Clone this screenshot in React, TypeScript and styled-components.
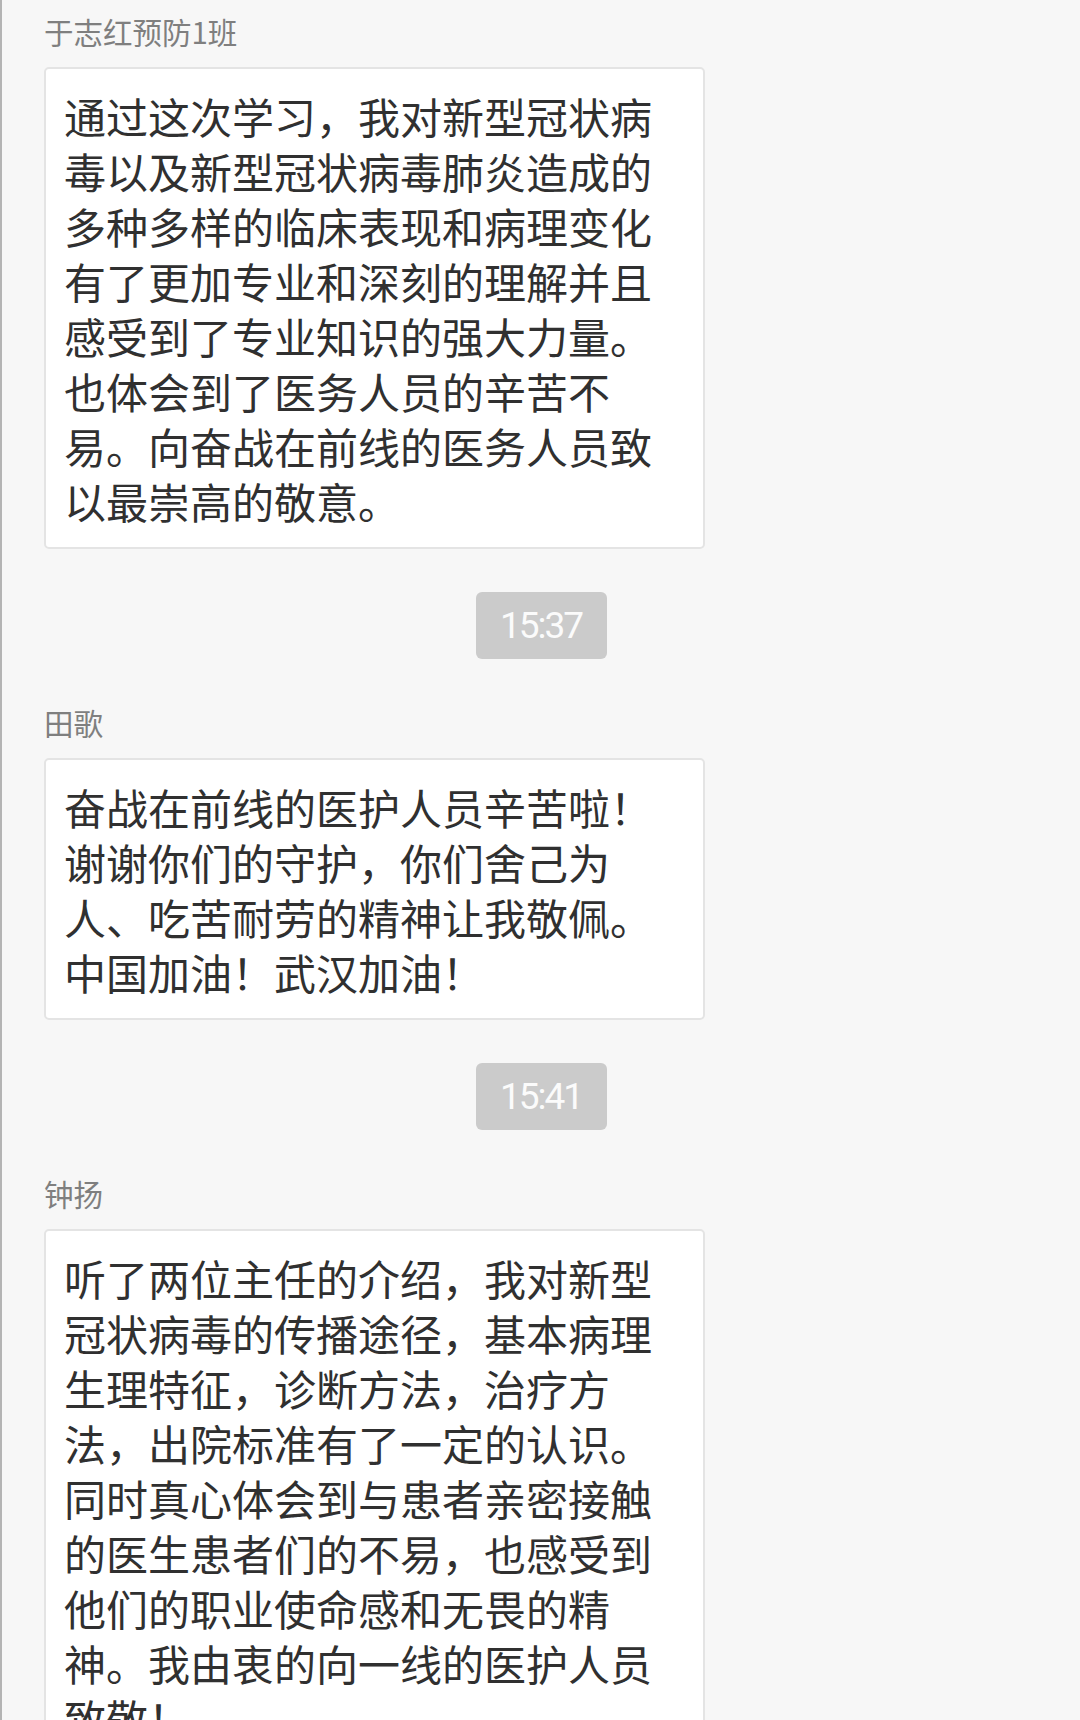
import React from "react";
import styled, { createGlobalStyle } from "styled-components";

const GlobalStyle = createGlobalStyle`
  html, body {
    margin: 0;
    padding: 0;
    background-color: #f7f7f7;
  }
  body {
    font-family: "Noto Sans CJK SC", "Noto Sans", sans-serif;
  }
`;

const ChatPage = styled.div`
  box-sizing: border-box;
  height: 1720px;
  border-left: 2px solid #b4b4b4;
  padding-top: 11px;
  display: flex;
  flex-direction: column;
  overflow: hidden;
`;

const MessageGroup = styled.div`
  display: flex;
  flex-direction: column;
  align-items: flex-start;
  padding-left: 42px;
  gap: 16px;
`;

const SenderName = styled.div`
  font-family: "Noto Sans CJK SC", sans-serif;
  font-size: 29.5px;
  line-height: 40px;
  height: 40px;
  color: #7f7f7f;
`;

const Bubble = styled.div`
  box-sizing: border-box;
  width: 661px;
  padding: 19px 18px;
  background-color: #ffffff;
  border: 2px solid #e4e4e4;
  border-radius: 5px;
  font-family: "Noto Sans CJK SC", sans-serif;
  font-size: 42px;
  line-height: 55px;
  color: #303030;
  line-break: strict;
`;

const TimeRow = styled.div`
  display: flex;
  justify-content: center;
  margin: 43px 0;
`;

const TimeStamp = styled.div`
  width: 131px;
  height: 67px;
  display: flex;
  align-items: center;
  justify-content: center;
  background-color: #cbcbcb;
  border-radius: 6px;
  font-family: Roboto, "Liberation Sans", sans-serif;
  font-weight: 400;
  font-size: 37px;
  letter-spacing: -2px;
  color: #fbfbfb;
`;

type Message = {
  name: string;
  text: string;
  time?: string;
};

const messages: Message[] = [
  {
    name: "于志红预防1班",
    text: "通过这次学习，我对新型冠状病毒以及新型冠状病毒肺炎造成的多种多样的临床表现和病理变化有了更加专业和深刻的理解并且感受到了专业知识的强大力量。也体会到了医务人员的辛苦不易。向奋战在前线的医务人员致以最崇高的敬意。",
    time: "15:37",
  },
  {
    name: "田歌",
    text: "奋战在前线的医护人员辛苦啦！谢谢你们的守护，你们舍己为人、吃苦耐劳的精神让我敬佩。中国加油！武汉加油！",
    time: "15:41",
  },
  {
    name: "钟扬",
    text: "听了两位主任的介绍，我对新型冠状病毒的传播途径，基本病理生理特征，诊断方法，治疗方法，出院标准有了一定的认识。同时真心体会到与患者亲密接触的医生患者们的不易，也感受到他们的职业使命感和无畏的精神。我由衷的向一线的医护人员致敬！",
  },
];

export default function App() {
  return (
    <>
      <GlobalStyle />
      <ChatPage>
        {messages.map((m) => (
          <React.Fragment key={m.name}>
            <MessageGroup>
              <SenderName>{m.name}</SenderName>
              <Bubble>{m.text}</Bubble>
            </MessageGroup>
            {m.time && (
              <TimeRow>
                <TimeStamp>{m.time}</TimeStamp>
              </TimeRow>
            )}
          </React.Fragment>
        ))}
      </ChatPage>
    </>
  );
}
